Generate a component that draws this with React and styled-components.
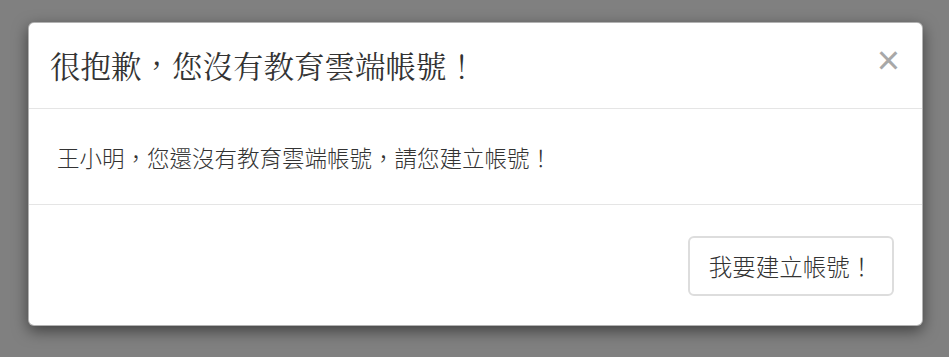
import React from 'react';
import styled, { createGlobalStyle } from 'styled-components';

const GlobalStyle = createGlobalStyle`
  html, body {
    margin: 0;
    height: 100%;
    background: #808080;
  }
  body {
    font-family: "Noto Sans CJK TC", "Liberation Sans", sans-serif;
    color: #333;
  }
`;

const Backdrop = styled.div`
  min-height: 357px;
  padding: 22px 26px 0 28px;
  box-sizing: border-box;
`;

const Dialog = styled.div`
  background: #fff;
  border: 1px solid rgba(0, 0, 0, 0.3);
  border-radius: 6px;
  box-shadow: 0 5px 15px rgba(0, 0, 0, 0.5);
  display: flex;
  flex-direction: column;
`;

const Header = styled.div`
  height: 85px;
  padding: 0 22px 0 21px;
  display: flex;
  align-items: center;
  justify-content: space-between;
  border-bottom: 1px solid #e5e5e5;
`;

const Title = styled.h4`
  margin: 0;
  font-family: "Noto Serif CJK TC", "Liberation Serif", "Noto Sans CJK TC", serif;
  font-size: 30.5px;
  font-weight: 400;
  line-height: 1;
  color: #333;
`;

const Close = styled.button`
  border: none;
  background: none;
  padding: 0;
  margin-top: -12px;
  color: #a8a8a8;
  font-family: "Liberation Sans", sans-serif;
  font-size: 40px;
  font-weight: 300;
  line-height: 1;
  cursor: pointer;
`;

const Body = styled.div`
  height: 95px;
  padding: 0 28px;
  display: flex;
  align-items: center;
  font-size: 22.5px;
  font-weight: 300;
  border-bottom: 1px solid #e5e5e5;
`;

const Footer = styled.div`
  padding: 31px 28px 29px;
  display: flex;
  justify-content: flex-end;
`;

const Button = styled.button`
  width: 206px;
  height: 60px;
  background: #fff;
  border: 2px solid #ddd;
  border-radius: 6px;
  color: #333;
  font-family: "Noto Sans CJK TC", sans-serif;
  font-size: 23.5px;
  font-weight: 300;
  cursor: pointer;
`;

export default function App() {
  return (
    <>
      <GlobalStyle />
      <Backdrop>
        <Dialog>
          <Header>
            <Title>很抱歉，您沒有教育雲端帳號！</Title>
            <Close aria-label="Close">×</Close>
          </Header>
          <Body>王小明，您還沒有教育雲端帳號，請您建立帳號！</Body>
          <Footer>
            <Button>我要建立帳號！</Button>
          </Footer>
        </Dialog>
      </Backdrop>
    </>
  );
}
